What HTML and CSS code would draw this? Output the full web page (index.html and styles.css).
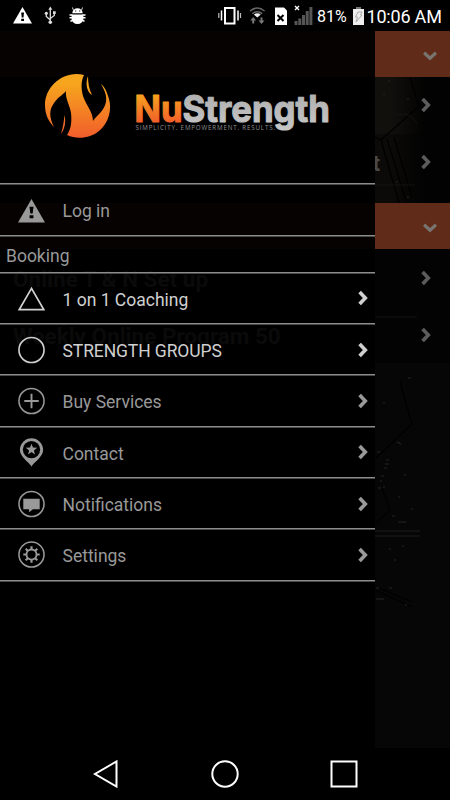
FILE: index.html
```
<!DOCTYPE html>
<html lang="en">
<head>
<meta charset="utf-8">
<title>NuStrength</title>
<link rel="stylesheet" href="styles.css">
</head>
<body>
<svg class="defs" width="0" height="0" aria-hidden="true">
  <symbol id="chevron" viewBox="0 0 10 16"><path d="M1.600 2 7.300 8l-5.700 6" fill="none" stroke="currentColor" stroke-width="3.600"/></symbol>
  <symbol id="down" viewBox="0 0 14 10"><path d="m1 1.800 6 5.400 6-5.400" fill="none" stroke="currentColor" stroke-width="3.300"/></symbol>
</svg>
<div class="phone">
  <header class="status">
    <svg width="220" height="30" viewBox="0 0 220 30">
      <path d="M22.500 7 32 23.500H13Z" fill="#fff"/><path d="M21.200 12.500h2.800l-.5 5h-1.800zM21.200 18.800h2.800v2.300h-2.800z" fill="#000"/>
      <g fill="none" stroke="#ddd" stroke-width="1.300"><path d="M50.300 9v13M46.300 13.500v3l4 3.500M54.300 12.500v3l-4 3"/></g>
      <g fill="#ddd"><path d="m50.300 6.500 2 3.200h-4zM53 11.200h2.700v2.700H53z"/><circle cx="46.300" cy="13.300" r="1.600"/><circle cx="50.300" cy="22.200" r="1.800"/></g>
      <path d="M73.500 10.500l-1-3M81.500 10.500l1-3" fill="none" stroke="#ddd"/>
      <path d="M72.300 13.200a5.200 5 0 0 1 10.400 0zM71.600 14.600h11.800v3.900a5.900 5.500 0 0 1-11.800 0z" fill="#fff"/>
      <path d="M69.500 14.900h3M69.500 17.800h3M70.500 21.300l2.300-1.300M82.500 14.900h3M82.500 17.800h3M84.500 21.300l-2.300-1.300" stroke="#fff" stroke-width="1.500"/>
      <path d="M75 11h1.300M79 11h1.300" stroke="#333"/>
    </svg>
    <svg class="signals" width="97" height="30" viewBox="217 0 97 30">
      <rect x="225" y="8" width="9.500" height="15.500" fill="none" stroke="#fff" stroke-width="2"/>
      <path d="M221.500 10.500v10M238 10.500v10" stroke="#fff" stroke-width="1.500"/><path d="M218.800 13v5M240.500 13v5" stroke="#bbb" stroke-width="1.200"/>
      <g fill="none" stroke="#666" stroke-width="1.600"><path d="M250 11q7.300-6 14.600 0M252.300 13.700q5-4 10 0"/></g><path d="M253.800 14.500q3.500-2.500 7 0l-3.500 3z" fill="#eee"/>
      <path d="m253.200 17 3 3.500h-2v3h-2v-3h-2zM261.500 24l-3-3.500h2v-3h2v3h2z" fill="#777"/>
      <path d="M275 7.500h9l3 3V25h-12z" fill="#fff"/><path d="m277.500 15 6 6m0-6-6 6" stroke="#000" stroke-width="2"/>
      <path d="M294.500 21h3v4h-3zM298.300 18.500h3V25h-3zM302 15h3v10h-3zM305.700 11h3v14h-3zM309.400 7h3v18h-3z" fill="#555"/><path d="m295 6 4 4m0-4-4 4" stroke="#fff" stroke-width="1.300"/>
    </svg>
    <span class="percent">81%</span>
    <svg class="battery" width="11" height="19" viewBox="0 0 11 19"><path d="M3 0h5v2h3v16H0V2h3z" fill="#eee"/><path d="M3 0h5v2H3z" fill="#777"/><path d="M5 5h4L7.500 8H9l-6 7 1.500-5h-2z" fill="none" stroke="#aaa"/></svg>
    <span class="clock">10:06 AM</span>
  </header>

  <main class="stage">
    <section class="page">
      <div class="group"><svg class="down"><use href="#down"/></svg></div>
      <div class="entry"><svg class="go"><use href="#chevron"/></svg></div>
      <div class="entry entry-end"><span>t</span><svg class="go"><use href="#chevron"/></svg></div>
      <div class="group second"><svg class="down"><use href="#down"/></svg></div>
      <div class="entry"><span>Online T &amp; N Set up</span><svg class="go"><use href="#chevron"/></svg></div>
      <div class="entry"><span>Weekly Online Program 50</span><svg class="go"><use href="#chevron"/></svg></div>
      <svg class="texture" width="450" height="717" viewBox="0 31 450 717">
        <g fill="none" stroke="#000" stroke-width="1.200"><path d="m410 78 9 28-38 34-6-3M381 140l18 63M387 139l19 62M394 137l18 60M400 382l12 42-36 34M382 488l8 22-15 14M375 590l37 17M379 588l33 14"/></g>
        <g fill="none" stroke="#1c1b19" stroke-width=".6"><path d="M397 115q14-4 20 9M375 185h40M375 317h42"/></g>
        <path d="M375 531h45M375 536h45" stroke="#161616" stroke-width="1.500"/>
        <path d="M383 94h2M388 81h2M407 99h2M396 182h2M407 197h2M397 442l4 2M383 403h2M404 475h2M398 497h2M411 509h2M392 516h3M398 522h8M389 549h2M402 546h2M394 560h2M376 588h3M389 588h3M405 605h2M376 599h8M408 378h3M386 460h3M385 464h4M384 468h3M381 476h3M380 481h2M378 488h3M383 487h2M377 452h3" stroke="#252525" stroke-width="1.200"/>
      </svg>
    </section>

    <nav class="drawer">
      <div class="brand">
        <svg width="375" height="153" viewBox="0 31 375 153">
          <defs>
            <linearGradient id="fire" x1="0" y1="0" x2="0" y2="1"><stop offset=".15" stop-color="#f6a51d"/><stop offset="1" stop-color="#f15d2b"/></linearGradient>
            <linearGradient id="fire-text" gradientUnits="userSpaceOnUse" x1="0" y1="94" x2="0" y2="123"><stop offset="0" stop-color="#f6a51d"/><stop offset="1" stop-color="#f15d2b"/></linearGradient>
            <linearGradient id="steel" gradientUnits="userSpaceOnUse" x1="0" y1="94" x2="0" y2="130"><stop offset="0" stop-color="#b0b0b0"/><stop offset="1" stop-color="#c7c7c7"/></linearGradient>
          </defs>
          <path d="M84 75C64 70 45 86 45 105C45 114 48 121 54 127C49 117 49 110 54 103C58 97 64 94 66 91C65 98 70 106 71 113C72 122 71 129 67 135C77 140 91 138 99 131C109 123 112 109 109 99C107 92 105 87 101 84C105 91 107 96 106 102C104 111 97 115 93 121C93 112 86 105 83 96C81 88 81 81 84 75Z" fill="url(#fire)"/>
          <path d="M88 76C85 84 87 92 92 95C89 89 88 83 88 76ZM64.500 115C66 121 65 129 61 134C63 127 64 121 64.500 115Z" fill="url(#fire)"/>
          <g class="wordmark"><text x="134.500" y="122" textLength="48" lengthAdjust="spacingAndGlyphs" fill="url(#fire-text)" stroke="url(#fire-text)">Nu</text><text x="182.500" y="122" textLength="147.500" lengthAdjust="spacingAndGlyphs" fill="url(#steel)" stroke="url(#steel)">Strength</text></g>
          <text class="tagline" x="135.500" y="130" textLength="139.500">SIMPLICITY. EMPOWERMENT. RESULTS.</text>
        </svg>
      </div>
      <a class="item"><svg class="icon" viewBox="0 0 28 30"><path d="m14 3 14 24.500H0z" fill="currentColor"/><path d="M11.900 11h4.200l-.9 7h-2.400zM12 20h4v3h-4z" fill="#000"/></svg><span>Log in</span></a>
      <h2 class="heading">Booking</h2>
      <a class="item bright"><svg class="icon" viewBox="0 0 28 30"><path d="m14 4.500 12.700 22H1.300z" fill="none" stroke="currentColor" stroke-width="1.800"/></svg><span>1 on 1 Coaching</span><svg class="go"><use href="#chevron"/></svg></a>
      <a class="item bright"><svg class="icon" viewBox="0 0 28 30"><circle cx="14" cy="14.500" r="13" fill="none" stroke="currentColor" stroke-width="1.700"/></svg><span class="caps">STRENGTH GROUPS</span><svg class="go"><use href="#chevron"/></svg></a>
      <a class="item"><svg class="icon" viewBox="0 0 28 30"><g fill="none" stroke="currentColor" stroke-width="1.600"><circle cx="14" cy="14.500" r="13"/><path d="M6.500 14.500h15M14 7v15" stroke-width="2"/></g></svg><span>Buy Services</span><svg class="go"><use href="#chevron"/></svg></a>
      <a class="item"><svg class="icon" viewBox="0 0 28 30"><path d="M14 29.500C12 25 2 20 2 12.300a12 12 0 0 1 24 0C26 20 16 25 14 29.500z" fill="currentColor"/><circle cx="14" cy="12" r="9" fill="#000"/><path d="m14 5.800 1.500 4.100 4.400.2-3.400 2.700 1.100 4.200-3.600-2.400-3.600 2.400 1.100-4.200-3.400-2.700 4.400-.2z" fill="currentColor"/></svg><span>Contact</span><svg class="go"><use href="#chevron"/></svg></a>
      <a class="item"><svg class="icon" viewBox="0 0 28 30"><circle cx="14" cy="14.500" r="13" fill="none" stroke="currentColor" stroke-width="1.600"/><path d="M5.500 9h17v11h-7L11.500 23v-3h-6z" fill="currentColor"/></svg><span>Notifications</span><svg class="go"><use href="#chevron"/></svg></a>
      <a class="item"><svg class="icon" viewBox="0 0 28 30"><g fill="none" stroke="currentColor"><circle cx="14" cy="14" r="13" stroke-width="1.600"/><circle cx="14" cy="14" r="5.200" stroke-width="1.900"/><path d="M14 9V5.500M14 19v3.500M9 14H5.500M19 14h3.500M10.500 10.500 8 8M17.500 10.500 20 8M10.500 17.500 8 20M17.500 17.500 20 20" stroke-width="2.200"/></g></svg><span>Settings</span><svg class="go"><use href="#chevron"/></svg></a>
    </nav>
  </main>

  <footer class="softkeys">
    <svg width="26" height="28" viewBox="0 0 26 28"><path d="M23.500 1.500v25L2 14z" fill="none" stroke="#fff" stroke-width="2"/></svg>
    <svg width="28" height="28" viewBox="0 0 28 28"><circle cx="14" cy="14" r="12.700" fill="none" stroke="#fff" stroke-width="2"/></svg>
    <svg width="28" height="28" viewBox="0 0 28 28"><path d="M1.500 1.500h25v25h-25z" fill="none" stroke="#fff" stroke-width="2"/></svg>
  </footer>
</div>
</body>
</html>
```
FILE: styles.css
```
* { box-sizing: border-box; }
body { margin: 0; background: #000; font-family: Roboto, sans-serif; }
.defs { display: block; height: 0; }
.phone { width: 450px; height: 800px; display: grid; grid-template-rows: 31px 717px 52px; overflow: hidden; }
.status { display: flex; align-items: flex-start; color: #fff; white-space: nowrap; }
.status svg { flex: none; }
.signals { margin-left: -3px; }
.percent { margin-left: 3px; width: 36px; font-size: 16px; line-height: 33px; }
.status .battery { margin-top: 7px; }
.clock { margin-left: 2.500px; font-size: 18px; line-height: 33px; letter-spacing: -.2px; }

.stage { display: grid; grid-template-columns: 375px 75px; grid-template-rows: 717px; }
.page { grid-area: 1 / 1 / 2 / 3; display: grid; grid-template-rows: 46px 57px 69px 46px 57px 57px 1fr; background: #060606; }
.page > * { grid-column: 1; }
.group { grid-row: 1; display: flex; align-items: center; justify-content: flex-end; padding: 3px 13px 0 0; background: #602b18; z-index: 1; }
.group.second { grid-row: 4; }
.down { width: 14px; height: 10px; color: #787470; }
.entry { display: flex; align-items: center; justify-content: space-between; padding: 0 19px 0 13px; color: #bbb; font-size: 22.500px; font-weight: 700; background: #030303; }
.entry:nth-child(2) { grid-row: 2; justify-content: flex-end; padding-bottom: 1px; background: linear-gradient(90deg, #12100d 390px, #020202 425px); }
.entry:nth-child(3) { grid-row: 3; background: linear-gradient(90deg, #0b0a08 390px, #020202 425px); }
.entry:nth-child(5) { grid-row: 5; }
.entry:nth-child(6) { grid-row: 6; }
.entry span { padding-top: 2px; }
.entry-end { justify-content: flex-end; padding-bottom: 14px; }
.entry-end span { margin-right: 41px; color: #484848; }
.entry .go { color: #5c5c5c; }
.texture { grid-row: 1 / 8; }
.go { width: 10px; height: 16px; }

.drawer { grid-area: 1 / 1; z-index: 2; display: grid; grid-template-rows: 153px 51.500px 37.300px repeat(6, 51.300px); align-content: start; background: rgba(0, 0, 0, .95); color: #999; }
.brand, .item, .heading { border-bottom: 1px solid #8c8c8c; box-shadow: 0 1px #4a4a4a; }
.brand svg { display: block; }
.item { display: grid; grid-template-columns: 27px 1fr 10px; column-gap: 18px; align-items: center; padding: 2px 7px 0 17.500px; font-size: 17.500px; }
.item .icon { width: 27px; height: 29px; }
.item span { padding-top: 1.500px; }
.item .go { margin-top: -1px; }
.bright { color: #d0d0d0; }
.caps { letter-spacing: -.1px; }
.heading { margin: 0; padding: 3px 6px 0; font-size: 17.500px; font-weight: 400; line-height: 34px; }
.wordmark { font: 700 37px Inter, sans-serif; stroke-width: 1.100px; stroke-linejoin: round; }
.tagline { font: 6.200px "Open Sans", sans-serif; fill: #909090; }
.softkeys { display: flex; align-items: center; justify-content: space-between; padding: 0 92px 0 93px; }
```
